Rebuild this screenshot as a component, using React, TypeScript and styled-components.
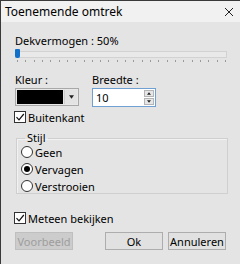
import React, { FC } from "react";
import styled, { createGlobalStyle } from "styled-components";

const GlobalStyle = createGlobalStyle`
	html, body {
		margin: 0;
		padding: 0;
		background: #e4e4e4;
	}
	body {
		font-family: "Noto Sans", "DejaVu Sans", sans-serif;
		font-size: 11px;
		color: #000;
	}
`;

const Window = styled.div`
	width: 240px;
	height: 264px;
	box-sizing: border-box;
	border-left: 1px solid #3a3a3a;
	border-top: 1px solid #3a3a3a;
	background: #e4e4e4;
	overflow: hidden;
`;

const TitleBar = styled.div`
	height: 21px;
	background: #f1f1f1;
	display: flex;
	align-items: center;
	justify-content: space-between;
	padding: 0 6px 0 4px;
	font-size: 12px;
`;

const Body = styled.div`
	padding: 12px 12px 0 14px;
	display: flex;
	flex-direction: column;
`;

const Label = styled.div<{ mt?: number }>`
	height: 14px;
	line-height: 14px;
	margin-top: ${(p) => p.mt ?? 0}px;
	white-space: nowrap;
`;

const Slider = styled.div`
	position: relative;
	height: 16px;
	width: 212px;
`;

const Track = styled.div`
	position: absolute;
	left: 0;
	right: 0;
	top: 3px;
	height: 5px;
	background: #e9e9e9;
	border: 1px solid #d2d2d2;
`;

const Thumb = styled.div`
	position: absolute;
	left: 0;
	top: 1px;
	width: 5px;
	height: 9px;
	background: #1170c8;
	border-radius: 1px 1px 2px 2px;
`;

const Ticks = styled.div`
	position: absolute;
	left: 2px;
	right: 1px;
	top: 12px;
	display: flex;
	justify-content: space-between;
`;

const Tick = styled.span`
	width: 1px;
	height: 2px;
	background: #9a9a9a;
`;

const FieldRow = styled.div`
	display: flex;
	gap: 13px;
	margin-top: 9px;
`;

const Field = styled.div`
	display: flex;
	flex-direction: column;
	gap: 1px;
`;

const ColorCombo = styled.div`
	width: 64px;
	height: 18px;
	box-sizing: border-box;
	border: 1px solid #a8a8a8;
	background: #e8e8e8;
	display: flex;
	padding: 1px;
	gap: 1px;
`;

const Swatch = styled.div`
	flex: 1;
	background: #000;
`;

const DropButton = styled.div`
	width: 12px;
	display: flex;
	align-items: center;
	justify-content: center;
	background: #e3e3e3;
	border-left: 1px solid #cfcfcf;
`;

const SpinBox = styled.div`
	width: 64px;
	height: 19px;
	box-sizing: border-box;
	border: 1px solid #6f9fd3;
	background: #fff;
	display: flex;
	align-items: center;
	padding-left: 3px;
`;

const SpinValue = styled.span`
	flex: 1;
`;

const SpinButtons = styled.div`
	width: 10px;
	height: 15px;
	margin-right: 1px;
	display: flex;
	flex-direction: column;
	gap: 1px;
`;

const SpinButton = styled.div`
	flex: 1;
	display: flex;
	align-items: center;
	justify-content: center;
	background: #e6e6e6;
	border: 1px solid #b4b4b4;
`;

const CheckRow = styled.label<{ mt: number }>`
	display: flex;
	align-items: center;
	gap: 2px;
	height: 14px;
	margin-top: ${(p) => p.mt}px;
	margin-left: -1px;
`;

const Box = styled.span`
	width: 12px;
	height: 12px;
	box-sizing: border-box;
	border: 1px solid #333;
	background: #fff;
	display: flex;
	align-items: center;
	justify-content: center;
`;

const Group = styled.fieldset`
	margin: 7px 0 0 1px;
	width: 212px;
	box-sizing: border-box;
	border: 1px solid #cfcfcf;
	box-shadow: inset 1px 1px 0 #f2f2f2;
	padding: 0 0 0 4px;
	display: flex;
	flex-direction: column;
	gap: 3px;
`;

const Legend = styled.legend`
	padding: 0 2px;
	margin-left: 4px;
	line-height: 14px;
`;

const RadioRow = styled.label`
	display: flex;
	align-items: center;
	gap: 2px;
	height: 14px;
`;

const Radio = styled.span<{ checked?: boolean }>`
	width: 12px;
	height: 12px;
	box-sizing: border-box;
	border-radius: 50%;
	border: 1px solid #333;
	background: #fff;
	display: flex;
	align-items: center;
	justify-content: center;

	&::after {
		content: "";
		width: 6px;
		height: 6px;
		border-radius: 50%;
		background: ${(p) => (p.checked ? "#000" : "transparent")};
	}
`;

const ButtonRow = styled.div`
	display: flex;
	margin-top: 7px;
	gap: 5px;
`;

const Button = styled.button<{ ml?: number }>`
	width: 58px;
	height: 18px;
	margin-left: ${(p) => p.ml ?? 0}px;
	padding: 0;
	font: inherit;
	color: #000;
	background: #e1e1e1;
	border: 1px solid #adadad;

	&:disabled {
		background: #cccccc;
		border-color: #bfbfbf;
		color: #9d9d9d;
	}
`;

const Tri: FC<{ up?: boolean; size?: number }> = ({ up, size = 5 }) => (
	<svg width={size} height={Math.ceil(size / 2) + 1} viewBox="0 0 6 4">
		<path d={up ? "M0 4 L3 0 L6 4 Z" : "M0 0 L6 0 L3 4 Z"} fill="#222" />
	</svg>
);

const Check = () => (
	<svg width="10" height="10" viewBox="0 0 10 10">
		<path d="M1.5 5.2 L4 7.8 L8.8 2" fill="none" stroke="#111" strokeWidth="1.2" />
	</svg>
);

const App: FC = () => {
	return (
		<Window>
			<GlobalStyle />
			<TitleBar>
				<span>Toenemende omtrek</span>
				<svg width="10" height="10" viewBox="0 0 10 10">
					<path d="M1 1 L9 9 M9 1 L1 9" stroke="#222" strokeWidth="1" />
				</svg>
			</TitleBar>

			<Body>
				<Label>Dekvermogen : 50%</Label>
				<Slider>
					<Track />
					<Thumb />
					<Ticks>
						{Array.from({ length: 26 }).map((_, i) => (
							<Tick key={i} />
						))}
					</Ticks>
				</Slider>

				<FieldRow>
					<Field>
						<Label>Kleur :</Label>
						<ColorCombo>
							<Swatch />
							<DropButton>
								<Tri />
							</DropButton>
						</ColorCombo>
					</Field>
					<Field>
						<Label>Breedte :</Label>
						<SpinBox>
							<SpinValue>10</SpinValue>
							<SpinButtons>
								<SpinButton>
									<Tri up size={4} />
								</SpinButton>
								<SpinButton>
									<Tri size={4} />
								</SpinButton>
							</SpinButtons>
						</SpinBox>
					</Field>
				</FieldRow>

				<CheckRow mt={3}>
					<Box>
						<Check />
					</Box>
					Buitenkant
				</CheckRow>

				<Group>
					<Legend>Stijl</Legend>
					<RadioRow>
						<Radio />
						Geen
					</RadioRow>
					<RadioRow>
						<Radio checked />
						Vervagen
					</RadioRow>
					<RadioRow>
						<Radio />
						Verstrooien
					</RadioRow>
				</Group>

				<CheckRow mt={17}>
					<Box>
						<Check />
					</Box>
					Meteen bekijken
				</CheckRow>

				<ButtonRow>
					<Button disabled>Voorbeeld</Button>
					<Button ml={27}>Ok</Button>
					<Button>Annuleren</Button>
				</ButtonRow>
			</Body>
		</Window>
	);
};

export default App;
